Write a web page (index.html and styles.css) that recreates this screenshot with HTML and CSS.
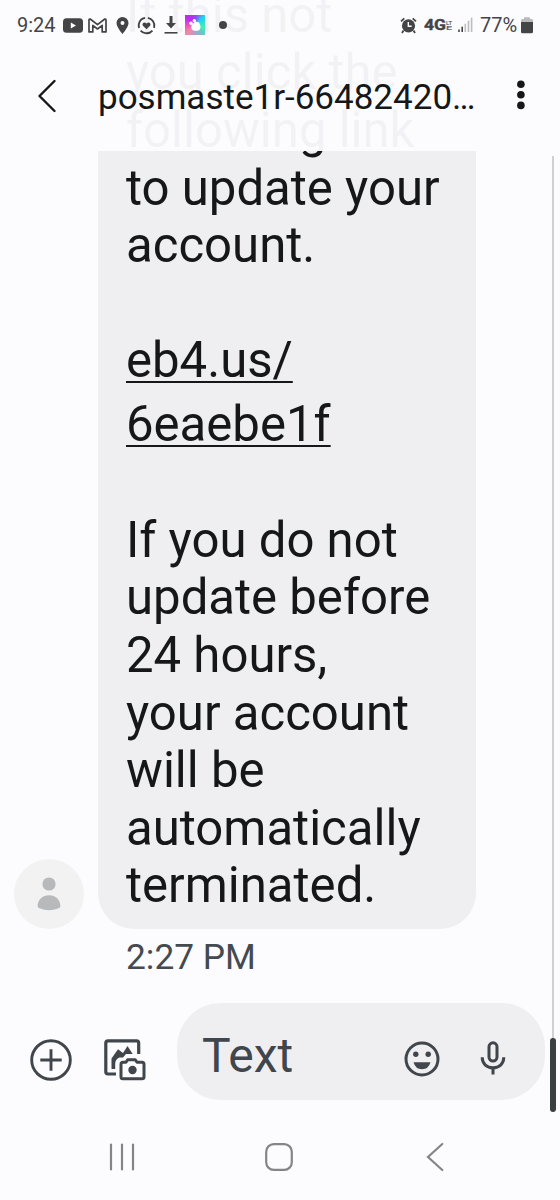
FILE: index.html
```html
<!DOCTYPE html>
<html lang="en">
<head>
    <meta charset="UTF-8">
    <meta name="viewport" content="width=device-width, initial-scale=1.0">
    <title>Messages</title>
    <link rel="stylesheet" href="styles.css">
</head>
<body>
    <div class="phone">
        <header class="top">
            <div class="status">
                <span class="time">9:24</span>
                <svg class="youtube" width="20" height="15" viewBox="0 0 20 15"><rect y=".3" width="20" height="14.4" rx="3.5" fill="#444446"/><path d="M7.8 4.6l5.2 2.9-5.2 2.9z" fill="#fcfcff"/></svg>
                <svg class="gmail" width="19" height="15" viewBox="0 0 19 15"><path d="M1 13.9V2.1Q1 .9 2.2 1L9.5 6.7 16.8 1Q18 .9 18 2.1V13.9H14.2V7.4L9.5 11 4.8 7.4V13.9z" fill="none" stroke="#444446" stroke-width="1.7" stroke-linejoin="round"/></svg>
                <svg class="pin" width="13" height="17" viewBox="0 0 13 17"><path d="M6.5 0A6 6 0 0 0 .5 6C.5 10.2 6.5 17 6.5 17S12.5 10.2 12.5 6A6 6 0 0 0 6.5 0z" fill="#444446"/><circle cx="6.5" cy="6" r="2" fill="#fcfcff"/></svg>
                <svg class="heart" width="19" height="19" viewBox="0 0 19 19"><circle cx="9.5" cy="9.5" r="7.8" fill="none" stroke="#444446" stroke-width="1.9" stroke-dasharray="13.3 3" transform="rotate(-80 9.5 9.5)"/><path d="M9.5 13.3L5.9 9.7C4.4 7.8 6.9 4.8 9.5 7.4 12.1 4.8 14.6 7.8 13.1 9.7z" fill="#444446"/></svg>
                <svg class="download" width="14" height="18" viewBox="0 0 14 18"><path d="M5.5 0h3v7H12l-5 5.5L2 7h3.5z" fill="#444446"/><path d="M.5 16.8h13" stroke="#444446" stroke-width="1.6"/></svg>
                <span class="paw">
                    <svg width="20" height="20" viewBox="0 0 20 20" fill="#fff"><rect x="6.3" y="8.2" width="9.2" height="7.5" rx="3.7"/><circle cx="11.5" cy="10" r="3.3"/><circle cx="6" cy="8.3" r="1.8"/><circle cx="9.3" cy="5.7" r="1.7"/></svg>
                </span>
                <span class="more-dot"></span>
                <div class="status-right">
                    <svg class="alarm" width="17" height="17" viewBox="0 0 17 17"><circle cx="8.5" cy="8.8" r="6.6" fill="#444446"/><path d="M1 4.3L4.3 1.3M16 4.3L12.7 1.3M3.5 13.5L2 16M13.5 13.5L15 16" stroke="#444446" stroke-width="1.8"/><path d="M8.3 5v4.3h3.4" fill="none" stroke="#fcfcff" stroke-width="1.4"/></svg>
                    <svg class="network" width="29" height="18" viewBox="0 0 29 18"><text class="g4" x="0" y="14" textLength="22" lengthAdjust="spacingAndGlyphs">4G</text><text class="lte" x="22" y="8.5" textLength="6" lengthAdjust="spacingAndGlyphs">LT</text><text class="lte" x="22" y="14" textLength="6" lengthAdjust="spacingAndGlyphs">E</text></svg>
                    <svg class="signal" width="15" height="16" viewBox="0 0 15 16"><path d="M1 12.5V15M4.2 9.7V15" stroke="#444446" stroke-width="1.6"/><path d="M7.3 6.8V15M10.5 3.7V15M13.6 .5V15" stroke="#bdbdc0" stroke-width="1.6"/></svg>
                    <span class="percent">77%</span>
                    <svg class="battery" width="12" height="17" viewBox="0 0 12 17"><path d="M0 5V3.5Q0 2 1.5 2H3V.8Q3 .2 3.6 .2h4.8Q9 .2 9 .8V2h1.5Q12 2 12 3.5V5z" fill="#b9b9bb"/><path d="M0 5h12v9.8Q12 16.3 10.5 16.3h-9Q0 16.3 0 14.8z" fill="#444446"/></svg>
                </div>
            </div>
            <div class="title-bar">
                <svg class="back" width="20" height="34" viewBox="0 0 20 34"><path d="M17.5 2L2.5 17 17.5 32" fill="none" stroke="#151719" stroke-width="2.4" stroke-linecap="round" stroke-linejoin="round"/></svg>
                <h1>posmaste1r-66482420…</h1>
                <svg class="menu" width="9" height="30" viewBox="0 0 9 30" fill="#151719"><circle cx="4.9" cy="4.2" r="3.8"/><circle cx="4.9" cy="14.8" r="3.8"/><circle cx="4.9" cy="25.4" r="3.8"/></svg>
            </div>
        </header>

        <main class="thread">
            <div class="message">
                <div class="avatar">
                    <svg width="24" height="34" viewBox="0 0 24 34" fill="#b8b9ba"><circle cx="12" cy="7" r="6.6"/><path d="M.6 29.5C.6 22.5 5.5 18.2 12 18.2S23.4 22.5 23.4 29.5Q23.4 30.6 21.5 31.3 12 35 2.5 31.3 .6 30.6 .6 29.5z"/></svg>
                </div>
                <div class="bubble">
                    If this not<br>you click the<br>following link<br>to update your<br>account.
                    <a class="link">eb4.us/<br>6eaebe1f</a>
                    If you do not<br>update before<br>24 hours,<br>your account<br>will be<br>automatically<br>terminated.
                </div>
            </div>
            <div class="sent">2:27 PM</div>
        </main>

        <div class="composer">
            <svg class="plus" width="42" height="42" viewBox="0 0 42 42" fill="none" stroke="#40464b" stroke-width="2.9"><circle cx="21" cy="21" r="19.3"/><path d="M21 10.3v21.4M10.3 21h21.4"/></svg>
            <svg class="gallery" width="42" height="42" viewBox="0 0 42 42">
                <path d="M12 35H4Q1.8 35 1.8 32.8V4Q1.8 1.8 4 1.8H32.5Q34.7 1.8 34.7 4V15" fill="none" stroke="#40464b" stroke-width="3.2"/>
                <path d="M7.5 30V19.5L14 10.2l5 3.8L23.5 7l5.2 8H22l-3 3.5h-3.5Q11.2 20 11.2 25V30z" fill="#40464b"/>
                <path d="M19 23.3H22L23.7 20.7H31.3L33 23.3H38Q40 23.3 40 25.3V37.7Q40 39.7 38 39.7H19Q17 39.7 17 37.7V25.3Q17 23.3 19 23.3z" fill="#fcfcff" stroke="#40464b" stroke-width="3" stroke-linejoin="round"/>
                <circle cx="28.5" cy="31" r="4.2" fill="#40464b"/>
            </svg>
            <div class="field">
                <span class="placeholder">Text</span>
                <svg class="smiley" width="36" height="36" viewBox="0 0 36 36" fill="#40464b"><circle cx="18" cy="18" r="16" fill="none" stroke="#40464b" stroke-width="3"/><circle cx="11.8" cy="13.3" r="2.7"/><circle cx="24.2" cy="13.3" r="2.7"/><path d="M9.5 21.2h17Q24.5 28.2 18 28.2T9.5 21.2z"/></svg>
                <svg class="mic" width="26" height="34" viewBox="0 0 26 34" fill="none" stroke="#40464b" stroke-width="3"><rect x="9" y="1.8" width="8" height="18.2" rx="4"/><path d="M2.2 16.3C2.2 23 7 26.8 13 26.8S23.8 23 23.8 16.3M13 26.8V33.5"/></svg>
            </div>
        </div>

        <nav class="nav">
            <svg width="26" height="28" viewBox="0 0 26 28"><path d="M2 1.5v25M13 1.5v25M24 1.5v25"/></svg>
            <svg class="nav-home" width="28" height="28" viewBox="0 0 28 28"><rect x="1.2" y="1.2" width="25.6" height="25.6" rx="7.5"/></svg>
            <svg class="nav-back" width="18" height="30" viewBox="0 0 18 30"><path d="M16.3 2L2 15l14.3 13"/></svg>
        </nav>

        <div class="scroll-track"></div>
        <div class="scroll-thumb"></div>
    </div>
</body>
</html>
```
FILE: styles.css
```css
* {
    box-sizing: border-box;
}
body {
    margin: 0;
    background-color: #fcfcff;
    font-family: Roboto, "Liberation Sans", sans-serif;
}
svg {
    display: block;
    flex-shrink: 0;
}
.phone {
    position: relative;
    width: 560px;
    height: 1200px;
    overflow: hidden;
    display: flex;
    flex-direction: column;
}

.top {
    position: absolute;
    top: 0;
    left: 0;
    z-index: 1;
    width: 100%;
    height: 151px;
    background-color: rgba(252, 252, 255, 0.96);
}
.status {
    display: flex;
    align-items: center;
    height: 50px;
    padding: 0 27px 0 17px;
    color: #444446;
    font-size: 20px;
}
.time {
    width: 46px;
}
.gmail {
    margin-left: 5px;
}
.pin {
    margin-left: 9px;
}
.heart {
    margin-left: 8px;
}
.download {
    margin-left: 8px;
}
.paw {
    width: 20px;
    height: 20px;
    margin-left: 7px;
    background: conic-gradient(from 45deg, #20d0f0, #40f0b0 60deg, #70c0d0 100deg, #d090c0 150deg, #f08aa0 180deg, #f050c0 220deg, #c02af0 270deg, #a040f5 320deg, #20d0f0);
}
.more-dot {
    width: 8px;
    height: 8px;
    margin-left: 14px;
    border-radius: 50%;
    background-color: #444446;
}
.status-right {
    display: flex;
    align-items: center;
    margin-left: auto;
}
.network {
    margin-left: 7px;
    fill: #444446;
    font-weight: 700;
}
.g4 {
    font-size: 15px;
    stroke: #444446;
    stroke-width: 0.4px;
}
.lte {
    font-size: 6px;
    fill: #66666a;
}
.signal {
    margin-left: 5px;
}
.percent {
    width: 41px;
    margin-left: 7px;
}
.title-bar {
    display: flex;
    align-items: center;
    height: 92px;
    padding: 0 35px 0 37px;
}
.title-bar h1 {
    flex: 1;
    margin: 2px 0 0 41px;
    font-size: 35px;
    font-weight: 400;
    color: #151719;
    white-space: nowrap;
}
.menu {
    margin-bottom: 3px;
}

.thread {
    display: flex;
    flex-direction: column;
    justify-content: flex-end;
    height: 1003px;
    padding-bottom: 25px;
    overflow: hidden;
}
.message {
    display: flex;
    align-items: flex-end;
    padding-left: 14px;
}
.avatar {
    display: flex;
    align-items: center;
    justify-content: center;
    width: 70px;
    height: 70px;
    border-radius: 50%;
    background-color: #f2f2f2;
}
.bubble {
    width: 378px;
    margin-left: 14px;
    padding: 30px 28px 14px;
    border-radius: 36px;
    background-color: #efeff1;
    color: #151719;
    font-size: 49.1px;
    line-height: 57.6px;
    white-space: nowrap;
}
.link {
    display: block;
    margin: 53px 0 56px;
    line-height: 64px;
    text-decoration: underline;
    text-decoration-thickness: 2px;
    text-underline-offset: 4px;
    text-decoration-skip-ink: none;
}
.sent {
    margin: 8px 0 0 126px;
    color: #444a4f;
    font-size: 35.3px;
    line-height: 41px;
}

.composer {
    display: flex;
    align-items: center;
    height: 97px;
    padding: 0 15px 0 30px;
}
.plus,
.gallery {
    margin-top: 17px;
}
.gallery {
    margin-left: 32px;
}
.field {
    display: flex;
    align-items: center;
    flex: 1;
    height: 97px;
    margin-left: 31px;
    padding: 0 39px 0 25px;
    border-radius: 44px;
    background-color: #efeff1;
}
.placeholder {
    flex: 1;
    padding-top: 7px;
    color: #40464b;
    font-size: 48px;
}
.smiley {
    margin-top: 14px;
}
.mic {
    margin: 12px 0 0 40px;
}

.nav {
    display: flex;
    align-items: center;
    justify-content: space-between;
    height: 100px;
    padding: 13px 116px 0 109px;
    fill: none;
    stroke: #858587;
    stroke-width: 2.2;
    stroke-linecap: round;
}
.nav-home {
    margin-right: 4px;
}

.scroll-track {
    position: absolute;
    top: 156px;
    left: 552px;
    width: 2px;
    height: 884px;
    background-color: #d0d1d4;
}
.scroll-thumb {
    position: absolute;
    top: 1038px;
    left: 550px;
    width: 6px;
    height: 74px;
    border-radius: 3px;
    background-color: #3c3f42;
}
```
